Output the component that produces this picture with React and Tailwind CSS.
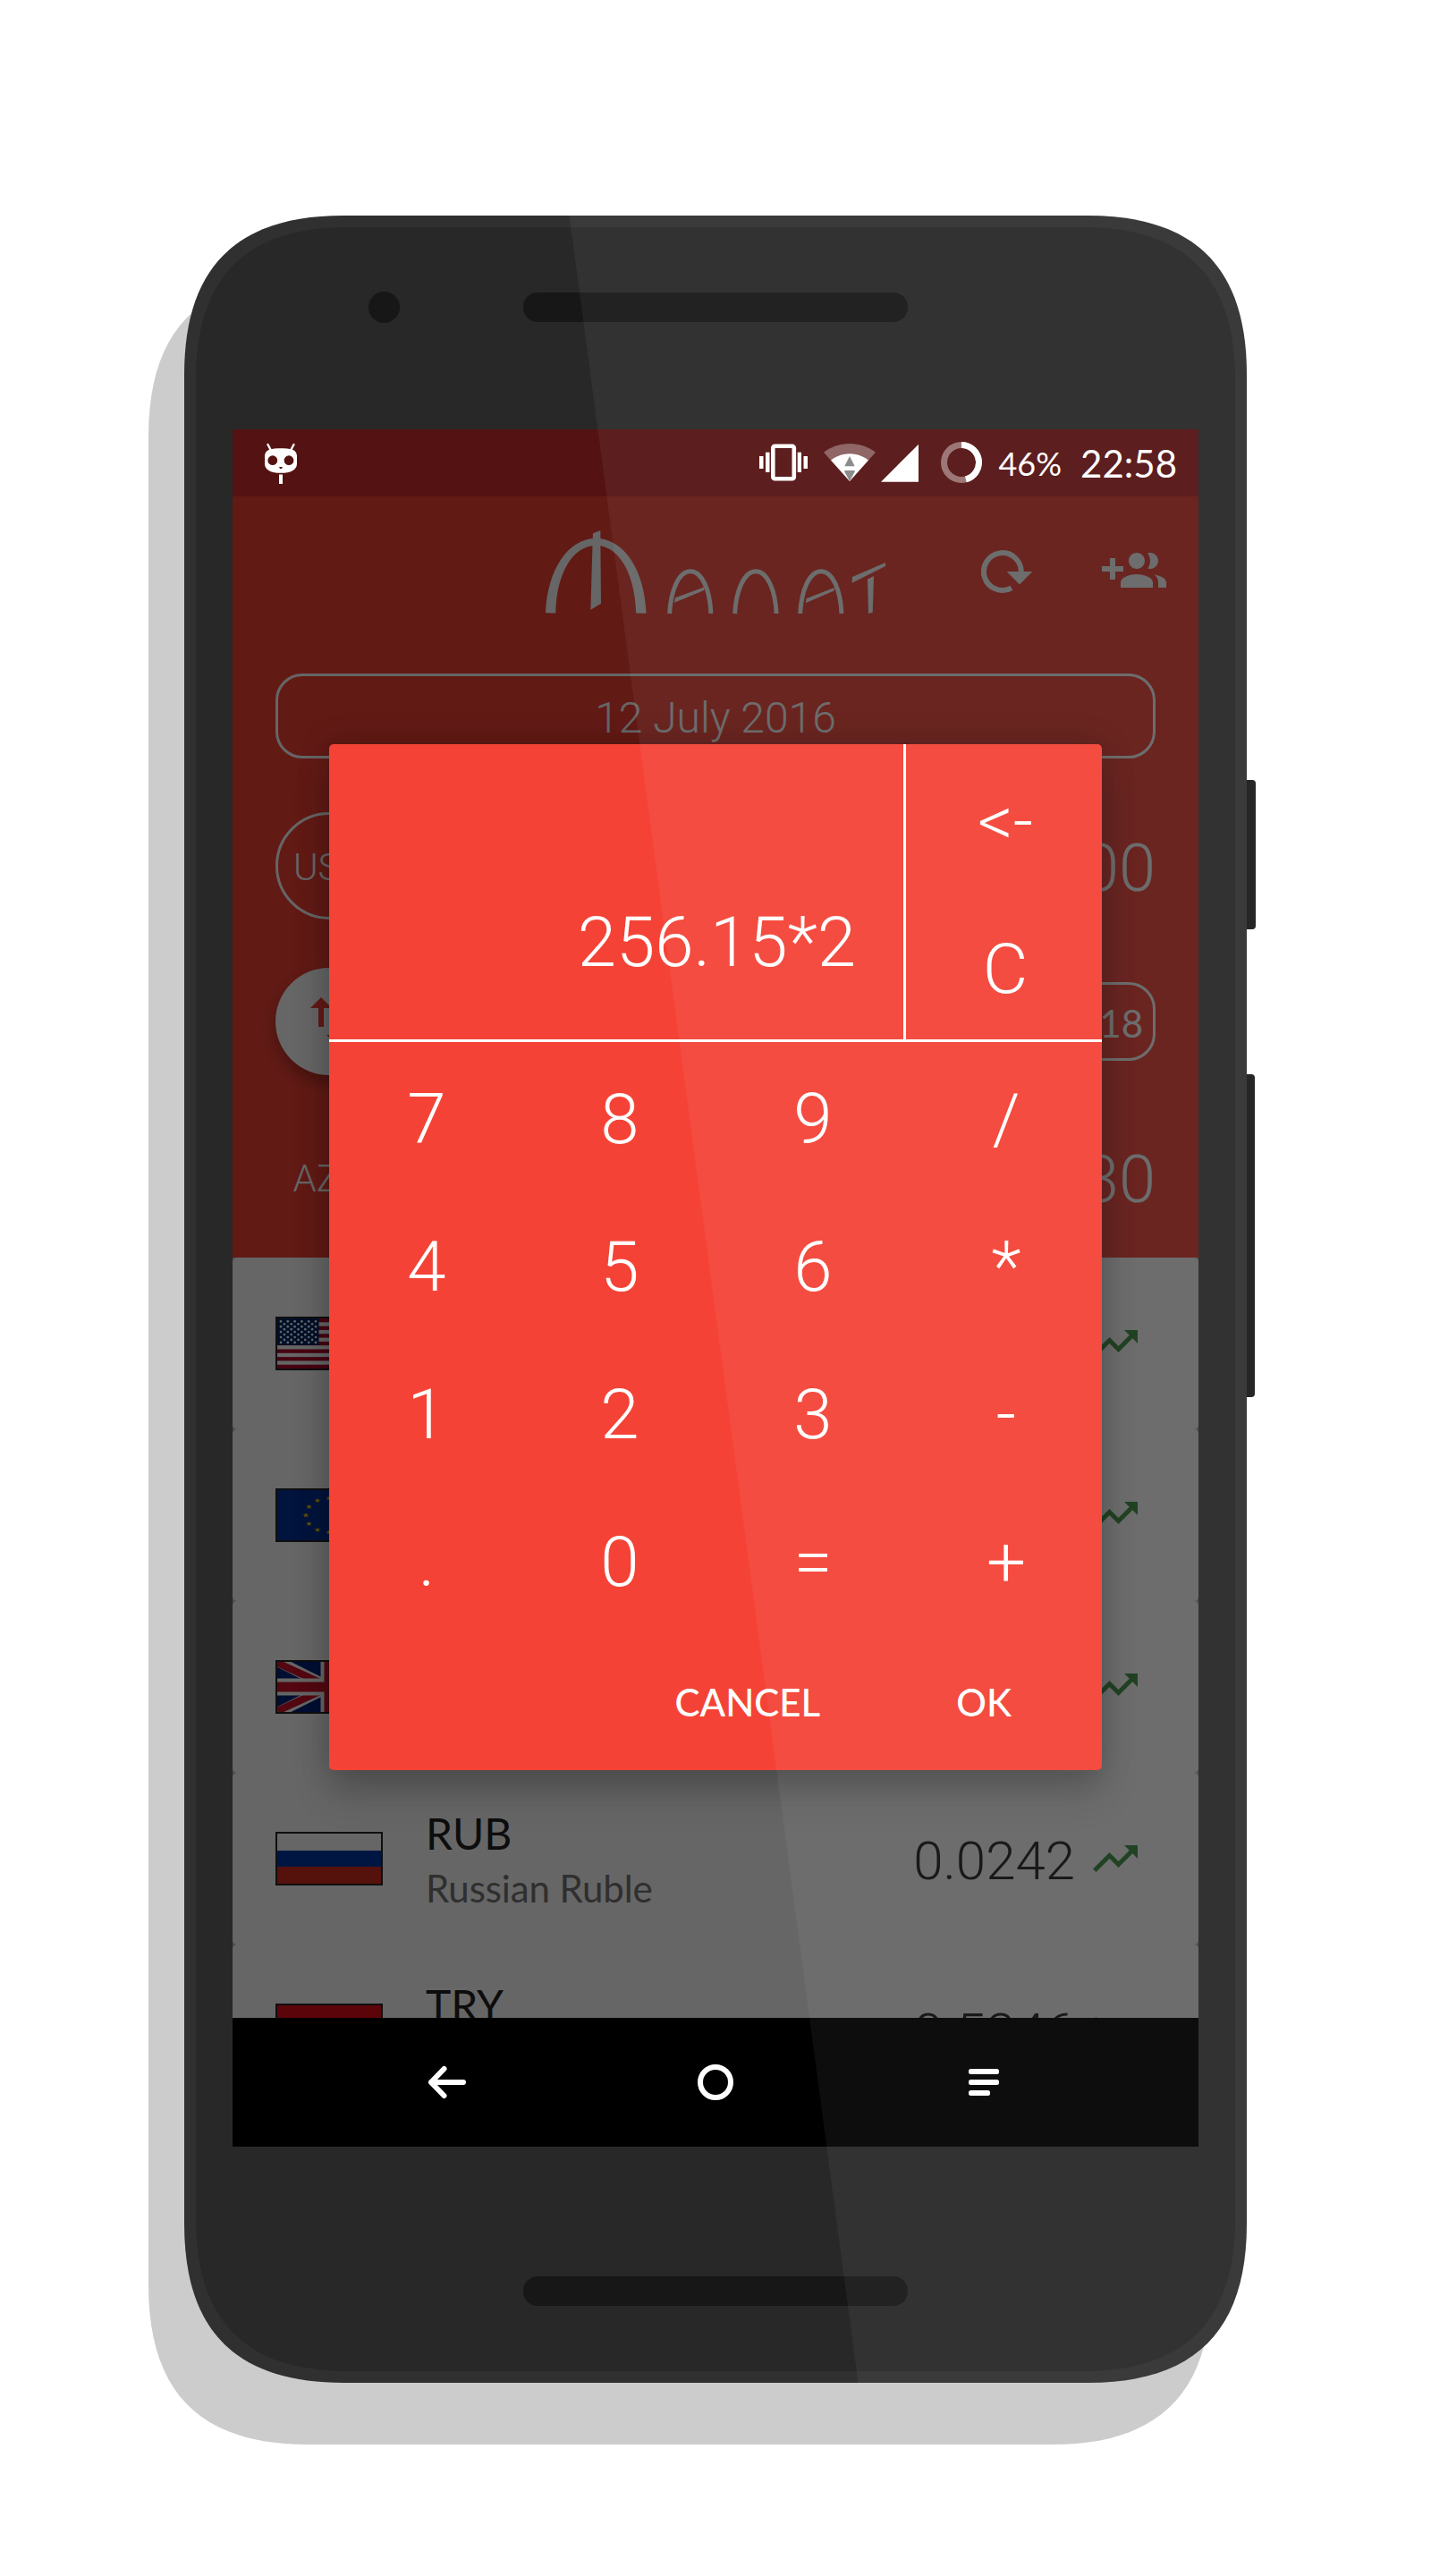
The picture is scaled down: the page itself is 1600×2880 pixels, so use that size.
import React from "react";

const BODY =
  "M206 419C206 299 264 241 384 241H1216C1336 241 1394 299 1394 419V2486C1394 2606 1336 2664 1216 2664H384C264 2664 206 2606 206 2486Z";
const FACE =
  "M219 424C219 310 275 254 389 254H1211C1325 254 1381 310 1381 424V2481C1381 2595 1325 2651 1211 2651H389C275 2651 219 2595 219 2481Z";

function PhoneBody() {
  return (
    <svg className="absolute inset-0" width="1600" height="2880" viewBox="0 0 1600 2880" aria-hidden="true">
      <path d={BODY} transform="translate(-40 69)" fill="#cccccc" />
      <rect x="1380" y="872" width="24" height="167" rx="4" fill="#262626" />
      <rect x="1380" y="1201" width="23" height="361" rx="4" fill="#262626" />
      <path d={BODY} fill="#303030" />
      <path d={FACE} fill="#282828" />
      <circle cx="429.5" cy="343.5" r="17.5" fill="#171717" />
      <rect x="585" y="327" width="430" height="33" rx="16" fill="#171717" />
      <rect x="585" y="2545" width="430" height="33" rx="16" fill="#171717" />
    </svg>
  );
}

function Gloss() {
  return (
    <svg className="pointer-events-none absolute inset-0 z-30" width="1600" height="2880" viewBox="0 0 1600 2880" aria-hidden="true">
      <clipPath id="body-clip">
        <path d={BODY} />
      </clipPath>
      <path d="M636.5 241H1394V2664H959.5Z" fill="#fff" fillOpacity="0.05" clipPath="url(#body-clip)" />
    </svg>
  );
}

function StatusBar() {
  return (
    <div className="absolute inset-x-0 top-0 z-10 flex h-[75px] items-center pr-6 pl-9 font-[Lato,sans-serif] text-white">
      <svg width="36" height="75" viewBox="296 480 36 75" fill="#fff">
        <path d="M299.5 497l3.200 6M328.500 497l-3.200 6" stroke="#fff" strokeWidth="2.400" strokeLinecap="round" />
        <path
          fillRule="evenodd"
          d="M314 501.300c5 0 9.500.3 12.500 1.200 3.800 1.200 5.500 4 5.500 7.500v8.500c0 7-7 10.300-18 10.300s-18-3.300-18-10.300V510c0-3.500 1.700-6.300 5.500-7.500 3-.9 7.500-1.200 12.500-1.200zM304.800 509.300a5.400 5.400 0 1 0 0 10.800 5.400 5.400 0 1 0 0-10.800zM323 509.300a5.400 5.400 0 1 0 0 10.800 5.400 5.400 0 1 0 0-10.800zM312 522l1 2h2l1-2z"
        />
        <rect x="312" y="530.500" width="4" height="10.500" />
      </svg>
      <div className="ml-auto flex items-center">
        <svg width="54" height="75" viewBox="850 480 54 75" fill="#fff">
          <rect x="865.3" y="498.800" width="23.500" height="36.500" rx="2" fill="none" stroke="#fff" strokeWidth="4.600" />
          <rect x="857" y="505.700" width="4.500" height="22.300" />
          <rect x="850" y="510" width="4.500" height="14" />
          <rect x="892.700" y="505.700" width="4.300" height="22.300" />
          <rect x="899.500" y="510" width="4.500" height="14" />
        </svg>
        <svg className="ml-[18px]" width="58" height="75" viewBox="922 480 58 75" fill="#fff">
          <path d="M951 538L922 505.700C930 499.500 940 496 951 496s21 3.500 29 9.700z" fillOpacity="0.320" />
          <path d="M951 538L930 514.500c6-4.500 13-7.200 21-7.200s15 2.700 21 7.200z" />
          <path d="M951 510l5.700 11.300h-11.400zM951 538l-5.700-10.500v-1.500h11.400v1.500z" fill="#868686" />
        </svg>
        <svg className="ml-1.5" width="42" height="75" viewBox="986 480 42 75" fill="#fff">
          <path d="M986 538.700H1028V496.700z" />
        </svg>
        <svg className="ml-[25px]" width="46" height="75" viewBox="1053 480 46 75" fill="none" strokeWidth="7">
          <circle cx="1076" cy="517" r="19.500" stroke="#fff" strokeOpacity="0.400" />
          <path d="M1076 497.500a19.500 19.500 0 0 1 4.850 38.390" stroke="#fff" />
        </svg>
        <span className="ml-[18px] pt-px text-[36px] leading-none">46%</span>
        <span className="ml-[21px] text-[42px] leading-none">22:58</span>
      </div>
    </div>
  );
}

function Logo() {
  return (
    <svg className="mt-[35px]" width="380" height="100" viewBox="610 590 380 100" fill="#fff">
      <path d="M610 685.300C612 637 635 602 666.500 601.700C697 602 721 637 722.500 685.700L711.200 685.500C710 640 691 609.800 666.500 609.700C641 610 622 640 621.300 685.600Z" />
      <path d="M663 596.300L671.400 593V609L672 674.700L660.400 681.700L662.500 609Z" />
      <g fill="none" stroke="#fff" strokeWidth="4.900">
        <path d="M748.600 686C750 660 759 638.700 772 638.700C785 638.700 794 660 794.900 686" />
        <path d="M821.600 686C823 660 832 638.700 845 638.700C858 638.700 867 660 868.100 686" />
        <path d="M894.700 686C896 660 905 638.700 918 638.700C931 638.700 940 660 940.900 686" />
      </g>
      <path d="M755 668.300L787.500 656.300L787 660L754 673.800Z" />
      <path d="M901.500 669.300L932.800 657L932.500 660.500L901 674Z" />
      <path d="M953 645L990 629V633L952.500 651.700Z" />
      <path d="M970 647.500L977 644L975.700 684.700L971 686Z" />
    </svg>
  );
}

function Header() {
  return (
    <div className="h-[851px] bg-[#f44336] px-12 text-white">
      <div className="-mx-3 grid h-[198px] grid-cols-[1fr_auto_1fr] items-start">
        <span />
        <Logo />
        <div className="flex justify-end gap-[77px] pt-12">
          <svg width="58" height="72" viewBox="1097 603 58 72">
            <path d="M1141.700 640A20.900 20.900 0 1 0 1131 657.300" fill="none" stroke="#fff" strokeWidth="6" />
            <path d="M1125.700 639h28.600l-14.300 14.500z" fill="#fff" />
          </svg>
          <svg width="72" height="72" viewBox="0 0 24 24" fill="#fff">
            <path d="M8 10H5V7H3v3H0v2h3v3h2v-3h3v-2zm10 1c1.660 0 2.990-1.340 2.990-3S19.660 5 18 5c-.320 0-.630.050-.910.140.570.810.900 1.790.900 2.860s-.340 2.040-.900 2.860c.280.090.590.140.910.140zm-5 0c1.660 0 2.990-1.340 2.990-3S14.660 5 13 5c-1.660 0-3 1.340-3 3s1.340 3 3 3zm6.620 2.160c.830.730 1.380 1.660 1.380 2.840v2h3v-2c0-1.540-2.370-2.490-4.380-2.840zM13 13c-2 0-6 1-6 3v2h12v-2c0-2-4-3-6-3z" />
          </svg>
        </div>
      </div>
      <div className="flex h-[95px] items-center justify-center rounded-[30px] border-[3px] border-white pt-1 text-[48px] leading-none font-light">
        12 July 2016
      </div>
      <div className="mt-[60px] flex flex-col gap-[54px]">
        <div className="flex h-[120px] items-center justify-between">
          <div className="flex size-[120px] items-center justify-center rounded-full border-[3px] border-white pt-[3px] text-[42px] leading-none font-light">
            USD
          </div>
          <span className="pt-1.5 text-[74px] leading-none font-light">00</span>
        </div>
        <div className="flex h-[120px] items-center justify-between">
          <div className="flex size-[120px] items-center justify-center rounded-full bg-white shadow-[0_8px_18px_rgba(0,0,0,0.3)]">
            <svg width="72" height="72" viewBox="0 0 24 24" fill="#f44336">
              <path d="M16 17.010V10h-2v7.010h-3L15 21l4-3.990h-3zM9 3L5 6.990h3V14h2V6.990h3L9 3z" />
            </svg>
          </div>
          <div className="flex h-[88px] w-[150px] items-center justify-end rounded-[30px] border-[3px] border-white pt-[3px] pr-[11px] font-[Lato,sans-serif] text-[42px] leading-none">
            18
          </div>
        </div>
        <div className="flex h-[120px] items-center justify-between">
          <div className="flex size-[120px] items-center justify-center pt-[3px] text-[42px] leading-none font-light">
            AZN
          </div>
          <span className="pt-1.5 text-[74px] leading-none font-light">30</span>
        </div>
      </div>
    </div>
  );
}

const STAR = "M0 -4L1.100 -1.200H4.200L1.700 .6 2.600 3.400 0 1.700 -2.600 3.400 -1.700 .6 -4.200 -1.200H-1.100Z";

function FlagUS() {
  const stars = [];
  for (let r = 0; r < 9; r++) {
    const n = r % 2 ? 5 : 6;
    for (let c = 0; c < n; c++) {
      stars.push(<circle key={r + "-" + c} cx={6 + c * 7.8 + (r % 2 ? 3.9 : 0)} cy={5.3 + r * 2.95} r="1.350" fill="#fff" />);
    }
  }
  return (
    <>
      <rect width="120" height="60" fill="#fff" />
      {[0, 1, 2, 3, 4, 5, 6].map((i) => (
        <rect key={i} y={2 + i * 8.62} width="120" height="4.310" fill="#b2082c" />
      ))}
      <rect width="48.500" height="31.800" fill="#002868" />
      {stars}
    </>
  );
}

function FlagEU() {
  return (
    <>
      <rect width="120" height="60" fill="#003399" />
      {Array.from({ length: 12 }, (_, i) => {
        const a = (i * Math.PI) / 6;
        return (
          <path
            key={i}
            d={STAR}
            fill="#ffcc00"
            transform={`translate(${60 + 26 * Math.cos(a)} ${30 + 19 * Math.sin(a)}) scale(0.850 0.700)`}
          />
        );
      })}
    </>
  );
}

function FlagGB() {
  return (
    <>
      <rect width="120" height="60" fill="#00247d" />
      <path d="M0 0L120 60M120 0L0 60" stroke="#fff" strokeWidth="12" />
      <path d="M2 3L56 28M118 3L64 28M2 57L56 32M118 57L64 32" stroke="#cf142b" strokeWidth="8" />
      <path d="M60 0V60M0 30H120" stroke="#fff" strokeWidth="19" />
      <path d="M60 0V60M0 30H120" stroke="#cf142b" strokeWidth="11" />
    </>
  );
}

function FlagRU() {
  return (
    <>
      <rect width="120" height="21" fill="#fff" />
      <rect y="21" width="120" height="18.500" fill="#0039a6" />
      <rect y="39" width="120" height="21" fill="#d52b1e" />
    </>
  );
}

function FlagTR() {
  return <rect width="120" height="60" fill="#e30a17" />;
}

const ROWS = [
  { id: "usd", Flag: FlagUS, up: true },
  { id: "eur", Flag: FlagEU, up: true },
  { id: "gbp", Flag: FlagGB, up: true },
  { id: "rub", Flag: FlagRU, up: true, code: "RUB", name: "Russian Ruble", rate: "0.0242" },
  { id: "try", Flag: FlagTR, up: false, code: "TRY", rate: "0.5346" },
];

function CurrencyRow({ row }) {
  const { Flag } = row;
  return (
    <div className="flex h-48 shrink-0 items-center rounded-[5px] bg-white pr-[63px] pl-12">
      <svg width="120" height="60" viewBox="0 0 120 60">
        <Flag />
        <rect x="1" y="1" width="118" height="58" fill="none" stroke="#262626" strokeWidth="2" />
      </svg>
      <div className="ml-12 flex h-[122px] flex-1 flex-col pt-[3px] font-[Lato,sans-serif]">
        <span className="text-[48px] leading-[60px] text-[#212121]">{row.code}</span>
        <span className="text-[42px] leading-[62px] tracking-[-0.1px] text-[#757575]">{row.name}</span>
      </div>
      <span className="mr-[15px] pt-[5px] text-[60px] leading-none font-light text-[#212121]">{row.rate}</span>
      {row.up ? (
        <svg width="60" height="60" viewBox="0 0 24 24" fill="#388e3c">
          <path d="M16 6l2.290 2.290-4.880 4.880-4-4L2 16.590 3.410 18l6-6 4 4 6.300-6.290L22 12V6z" />
        </svg>
      ) : (
        <svg width="60" height="60" viewBox="0 0 24 24" fill="#d32f2f">
          <path d="M16 18l2.290-2.290-4.880-4.880-4 4L2 7.410 3.410 6l6 6 4-4 6.300 6.290L22 12v6z" />
        </svg>
      )}
    </div>
  );
}

function NavBar() {
  return (
    <div className="absolute inset-x-0 bottom-0 z-20 flex h-36 items-center justify-center gap-[252px] bg-black">
      <svg width="48" height="48" viewBox="0 0 48 48" fill="none" stroke="#fff" strokeWidth="6" strokeLinecap="round" strokeLinejoin="round">
        <path d="M6 24H42M20.500 9L6 24L20.500 39" />
      </svg>
      <svg width="48" height="48" viewBox="0 0 48 48" fill="none" stroke="#fff" strokeWidth="6">
        <circle cx="24" cy="24" r="17" />
      </svg>
      <svg width="48" height="48" viewBox="0 0 48 48" fill="#fff">
        <rect x="7" y="9" width="34" height="6" rx="2.500" />
        <rect x="7" y="21" width="34" height="6" rx="2.500" />
        <rect x="7" y="33" width="24" height="6" rx="2.500" />
      </svg>
    </div>
  );
}

const KEYS = ["7", "8", "9", "/", "4", "5", "6", "*", "1", "2", "3", "-", ".", "0", "=", "+"];

function Calculator() {
  return (
    <div className="absolute top-[352px] left-[108px] z-20 flex h-[1147px] w-[864px] flex-col rounded-[5px] bg-[#f44336] text-[78px] leading-none font-light text-white shadow-[0_28px_40px_rgba(0,0,0,0.18),0_0_36px_rgba(0,0,0,0.18)]">
      <div className="flex h-[333px] border-b-[3px] border-white">
        <div className="flex flex-1 items-end justify-end pr-[53px] pb-[69px]">256.15*2</div>
        <div className="flex w-[222px] flex-col border-l-[3px] border-white">
          <button className="flex flex-1 items-center justify-center pt-2 pl-[3px]">&lt;-</button>
          <button className="flex flex-1 items-center justify-center pt-2 pl-[3px]">C</button>
        </div>
      </div>
      <div className="grid h-[660px] grid-cols-4 grid-rows-4">
        {KEYS.map((k) => (
          <button key={k} className="flex items-center justify-center pt-2 pl-0.5">
            {k}
          </button>
        ))}
      </div>
      <div className="flex flex-1 items-center justify-end gap-[152px] pt-0.5 pr-[101px] font-[Lato,sans-serif] text-[42px] font-medium">
        <button>CANCEL</button>
        <button>OK</button>
      </div>
    </div>
  );
}

export default function App() {
  return (
    <div className="relative h-[2880px] w-[1600px] overflow-hidden bg-white pt-[480px] pl-[260px] font-[Roboto,sans-serif]">
      <PhoneBody />
      <div className="relative h-[1920px] w-[1080px] overflow-hidden bg-[#bdbdbd]">
        <div className="flex h-[1920px] flex-col overflow-hidden">
          <div className="h-[75px] shrink-0 bg-[#d32f2f]" />
          <Header />
          <div className="flex flex-col">
            {ROWS.map((row) => (
              <CurrencyRow key={row.id} row={row} />
            ))}
          </div>
        </div>
        <div className="absolute inset-0 bg-black/60" />
        <StatusBar />
        <Calculator />
        <NavBar />
      </div>
      <Gloss />
    </div>
  );
}
